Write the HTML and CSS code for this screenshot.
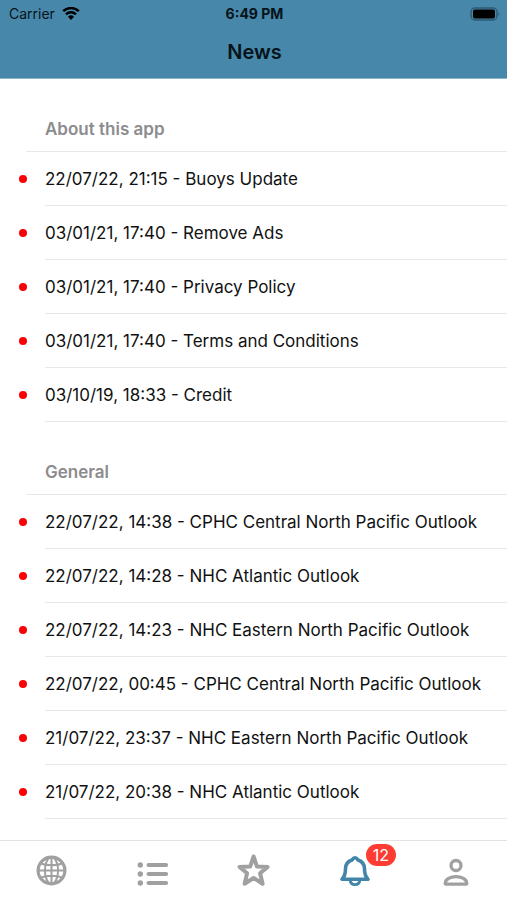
FILE: index.html
```html
<!DOCTYPE html>
<html lang="en">

<head>
  <meta charset="utf-8">
  <meta name="viewport" content="width=device-width, initial-scale=1">
  <title>News</title>
  <link rel="stylesheet" href="styles.css">
</head>

<body>
  <header class="header">
    <div class="status-bar">
      <div class="carrier">
        <span>Carrier</span>
        <svg class="wifi-icon" viewBox="0 0 18 14">
          <path d="M1.2 4.2a11.2 11.2 0 0 1 15.6 0" />
          <path d="M4 7.3a7.2 7.2 0 0 1 10 0" />
          <path class="wifi-dot" d="M6 9.7a4.3 4.3 0 0 1 6 0L9 13z" />
        </svg>
      </div>
      <span class="time">6:49 PM</span>
      <svg class="battery-icon" viewBox="0 0 30 14">
        <rect class="battery-case" x="1" y="1" width="26" height="12" rx="4" />
        <rect x="3" y="2.5" width="22" height="9" rx="2" />
        <path class="battery-tip" d="M28.5 5.2q2 1.8 0 3.6z" />
      </svg>
    </div>
    <h1>News</h1>
  </header>

  <main class="news">
    <section>
      <h2>About this app</h2>
      <ul class="news-list">
        <li><a href="#">22/07/22, 21:15 - Buoys Update</a></li>
        <li><a href="#">03/01/21, 17:40 - Remove Ads</a></li>
        <li><a href="#">03/01/21, 17:40 - Privacy Policy</a></li>
        <li><a href="#">03/01/21, 17:40 - Terms and Conditions</a></li>
        <li><a href="#">03/10/19, 18:33 - Credit</a></li>
      </ul>
    </section>

    <section>
      <h2>General</h2>
      <ul class="news-list">
        <li><a href="#">22/07/22, 14:38 - CPHC Central North Pacific Outlook</a></li>
        <li><a href="#">22/07/22, 14:28 - NHC Atlantic Outlook</a></li>
        <li><a href="#">22/07/22, 14:23 - NHC Eastern North Pacific Outlook</a></li>
        <li><a href="#">22/07/22, 00:45 - CPHC Central North Pacific Outlook</a></li>
        <li><a href="#">21/07/22, 23:37 - NHC Eastern North Pacific Outlook</a></li>
        <li><a href="#">21/07/22, 20:38 - NHC Atlantic Outlook</a></li>
      </ul>
    </section>
  </main>

  <nav class="tab-bar">
    <a class="tab" href="#" aria-label="Map">
      <svg viewBox="0 0 36 36">
        <g stroke-width="2">
          <circle cx="18.5" cy="17.5" r="13.4" stroke-width="3.2" />
          <ellipse cx="18.5" cy="17.5" rx="6.6" ry="13.4" />
          <path d="M18.5 4v27M5 17.5h27M7.5 10.5q11 3.6 22 0M7.5 24.5q11-3.6 22 0" />
        </g>
      </svg>
    </a>
    <a class="tab" href="#" aria-label="List">
      <svg viewBox="0 0 36 36">
        <path d="M14.5 12h17.6M14.5 21h17.6M14.5 30h17.6" stroke-width="4" />
        <path d="M6.3 12h0M6.3 21h0M6.3 30h0" stroke-width="5.4" />
      </svg>
    </a>
    <a class="tab" href="#" aria-label="Favourites">
      <svg viewBox="0 0 36 36">
        <path d="M17.6 3.5L21 13.6L31.6 13.9L24.1 20.2L26.6 30.7L17.6 25L8.6 30.7L11.1 20.2L3.6 13.9L14.2 13.6z" stroke-width="4" />
      </svg>
    </a>
    <a class="tab active" href="#" aria-label="News, 12 unread" aria-current="page">
      <svg viewBox="0 0 36 36">
        <path d="M5 26.2c3-3 3.5-5.5 3.5-10.500C8.5 10.5 12 8 15 7Q18 2.500 21 7C24 8 27.5 10.5 27.5 15.700c0 5 .5 7.500 3.500 10.500z" stroke-width="3.6" />
        <path d="M13.200 27.500c.6 5.400 9 5.400 9.600 0" stroke-width="2.8" />
      </svg>
      <span class="badge">12</span>
    </a>
    <a class="tab" href="#" aria-label="Profile">
      <svg viewBox="0 0 36 36">
        <circle cx="18" cy="12.5" r="5" stroke-width="3.3" />
        <path d="M7.2 30.6c0-9.3 21.600-9.300 21.600 0q0 .6-.8.6H8q-.8 0-.8-.6z" stroke-width="3.3" />
      </svg>
    </a>
  </nav>
</body>

</html>
```

FILE: styles.css
```css
* {
  box-sizing: border-box;
}

body {
  display: flex;
  flex-direction: column;
  height: 100vh;
  margin: 0;
  font-family: Inter, "Liberation Sans", sans-serif;
  font-size: 17px;
  line-height: 20px;
  color: #111;
  background-color: #fff;
}

a {
  color: inherit;
  text-decoration: none;
}

svg {
  display: block;
}

/* Header */
.header {
  flex: none;
  padding: 4px 7px 16px 9px;
  color: #06131a;
  background-color: #4787aa;
  border-bottom: 1px solid #8fb5cb;
}

/* Equal side columns keep the time centered */
.status-bar {
  display: grid;
  grid-template-columns: 1fr auto 1fr;
  align-items: center;
  font-size: 14px;
}

.carrier {
  display: flex;
  align-items: center;
  gap: 7px;
}

.time {
  font-weight: 700;
}

.wifi-icon {
  width: 18px;
  height: 14px;
  fill: none;
  stroke: #000;
  stroke-width: 2.5;
}

.wifi-icon .wifi-dot {
  fill: #000;
  stroke: none;
}

.battery-icon {
  justify-self: end;
  width: 30px;
  height: 14px;
}

.battery-case {
  fill: none;
  stroke: #2f5b73;
  stroke-width: 1.5;
}

.battery-tip {
  fill: #2f5b73;
}

h1 {
  margin: 18px 0 0;
  font-size: 20px;
  font-weight: 600;
  line-height: 20px;
  text-align: center;
}

/* News list */
.news {
  flex: 1;
  min-height: 0;
  overflow: hidden;
}

h2 {
  margin: 0 0 0 26px;
  padding: 40px 0 12px 19px;
  font-size: 17px;
  font-weight: 600;
  line-height: 20px;
  color: #8c8c8e;
  border-bottom: 1px solid #e8e8e8;
}

.news-list {
  margin: 0;
  padding: 0;
  list-style: none;
}

.news-list li {
  display: flex;
  align-items: center;
  gap: 18px;
  padding-left: 19px;
}

/* Unread dot */
.news-list li::before {
  content: "";
  flex: none;
  width: 8px;
  height: 8px;
  border-radius: 50%;
  background-color: #fb0007;
}

.news-list a {
  flex: 1;
  padding: 17px 0 16px;
  border-bottom: 1px solid #e8e8e8;
}

/* Bottom tabs */
.tab-bar {
  flex: none;
  display: flex;
  height: 60px;
  border-top: 1px solid #e2e2e2;
  background-color: #fff;
}

.tab {
  position: relative;
  flex: 1;
  display: flex;
  justify-content: center;
  align-items: center;
  color: #a0a0a0;
}

.tab svg {
  width: 36px;
  height: 36px;
  fill: none;
  stroke: currentColor;
  stroke-linecap: round;
  stroke-linejoin: round;
}

.tab.active {
  color: #4285a9;
}

.badge {
  position: absolute;
  top: 3px;
  left: 50%;
  min-width: 30px;
  margin-left: 11px;
  border-radius: 11px;
  font-size: 16px;
  line-height: 22px;
  text-align: center;
  color: #fff;
  background-color: #fd3d33;
}
```
